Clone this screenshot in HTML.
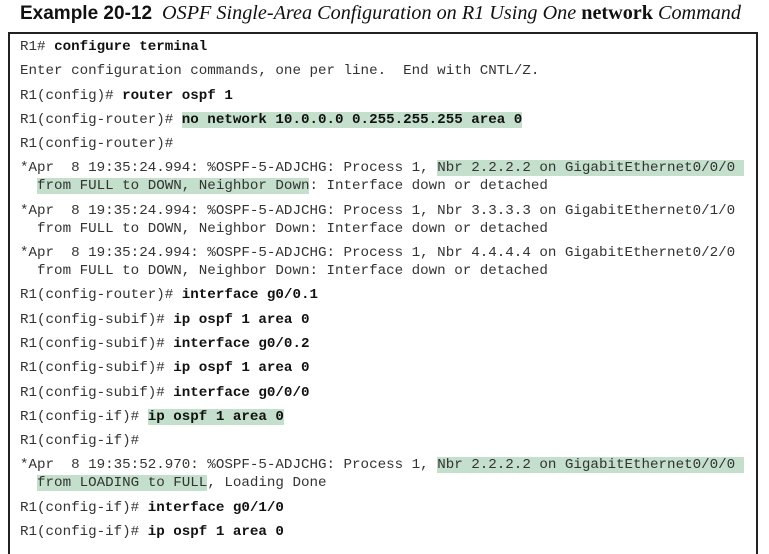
<!DOCTYPE html>
<html><head><meta charset="utf-8"><style>
body{margin:0;background:#fff;width:769px;height:542px;overflow:hidden;position:relative}
.t{position:absolute;left:20px;top:2px;white-space:nowrap;font-size:20px;color:#111}
.t b{font-family:"Liberation Sans",sans-serif;font-size:19px}
.t i{font-family:"Liberation Serif",serif;font-size:20.2px}
.t .n{font-family:"Liberation Serif",serif;font-weight:bold;font-style:normal;font-size:20.2px}
.box{position:absolute;left:8px;top:32px;width:746px;height:520px;border:2px solid #222;border-bottom:none}
.c{position:absolute;left:20px;top:38px;font-family:"Liberation Mono",monospace;font-size:14.2px;color:#333;white-space:pre}
.c div{line-height:18px;margin-bottom:6.3px}
.c b{color:#111}
.h{background:#c4dfcb}
</style></head><body>
<div class="t"><b>Example 20-12</b>&nbsp;&nbsp;<i>OSPF Single-Area Configuration on R1 Using One</i> <span class="n">network</span> <i>Command</i></div>
<div class="box"></div>
<div class="c"><div>R1# <b>configure terminal</b></div><div>Enter configuration commands, one per line.  End with CNTL/Z.</div><div>R1(config)# <b>router ospf 1</b></div><div>R1(config-router)# <b class="h">no network 10.0.0.0 0.255.255.255 area 0</b></div><div>R1(config-router)#</div><div>*Apr  8 19:35:24.994: %OSPF-5-ADJCHG: Process 1, <span class="h">Nbr 2.2.2.2 on GigabitEthernet0/0/0 </span>
  <span class="h">from FULL to DOWN, Neighbor Down</span>: Interface down or detached</div><div>*Apr  8 19:35:24.994: %OSPF-5-ADJCHG: Process 1, Nbr 3.3.3.3 on GigabitEthernet0/1/0
  from FULL to DOWN, Neighbor Down: Interface down or detached</div><div>*Apr  8 19:35:24.994: %OSPF-5-ADJCHG: Process 1, Nbr 4.4.4.4 on GigabitEthernet0/2/0
  from FULL to DOWN, Neighbor Down: Interface down or detached</div><div>R1(config-router)# <b>interface g0/0.1</b></div><div>R1(config-subif)# <b>ip ospf 1 area 0</b></div><div>R1(config-subif)# <b>interface g0/0.2</b></div><div>R1(config-subif)# <b>ip ospf 1 area 0</b></div><div>R1(config-subif)# <b>interface g0/0/0</b></div><div>R1(config-if)# <b class="h">ip ospf 1 area 0</b></div><div>R1(config-if)#</div><div>*Apr  8 19:35:52.970: %OSPF-5-ADJCHG: Process 1, <span class="h">Nbr 2.2.2.2 on GigabitEthernet0/0/0 </span>
  <span class="h">from LOADING to FULL</span>, Loading Done</div><div>R1(config-if)# <b>interface g0/1/0</b></div><div>R1(config-if)# <b>ip ospf 1 area 0</b></div></div>
</body></html>
